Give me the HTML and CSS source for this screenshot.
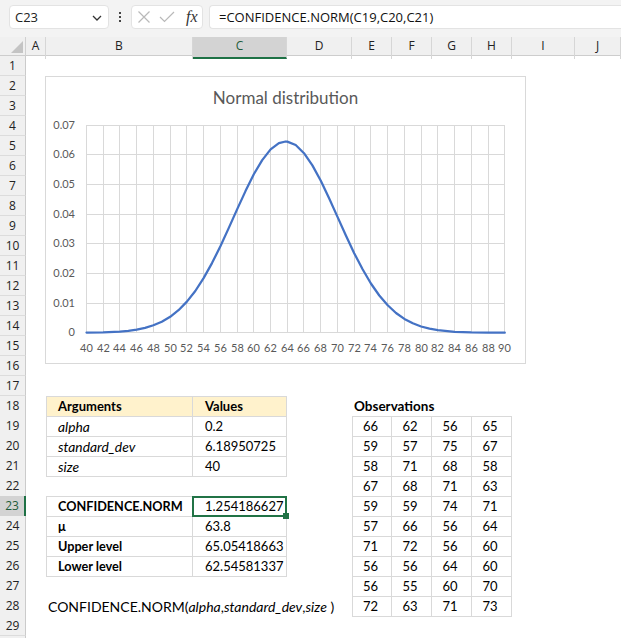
FILE: index.html
```html
<!DOCTYPE html>
<html lang="en">
<head>
<meta charset="utf-8">
<title>CONFIDENCE.NORM</title>
<link rel="stylesheet" href="styles.css">
</head>
<body>
<div class="toolbar">
  <div class="namebox"><span>C23</span>
    <svg class="chev" width="10" height="6" viewBox="0 0 10 6"><path d="M1 1 L5 5 L9 1" fill="none" stroke="#333" stroke-width="1.3"/></svg>
  </div>
  <div class="dots"><i></i><i></i><i></i></div>
  <div class="fxbox">
    <svg width="14" height="14" viewBox="0 0 14 14"><path d="M1.5 1.5 L12.5 12.5 M12.5 1.5 L1.5 12.5" stroke="#b9b9b9" stroke-width="1.2" fill="none"/></svg>
    <svg width="16" height="12" viewBox="0 0 16 12"><path d="M1 6 L5.5 10.5 L15 1" stroke="#b9b9b9" stroke-width="1.2" fill="none"/></svg>
    <span class="fx">fx</span>
  </div>
  <div class="formula">=CONFIDENCE.NORM(C19,C20,C21)</div>
</div>

<div class="sheet">
  <div class="r hdr">
    <div class="corner"><svg width="26" height="19" viewBox="0 0 26 19"><path d="M23 4 L23 16 L11 16 Z" fill="#c4c4c4"/></svg></div>
    <div class="ch">A</div>
    <div class="ch">B</div>
    <div class="ch csel">C</div>
    <div class="ch">D</div>
    <div class="ch">E</div>
    <div class="ch">F</div>
    <div class="ch">G</div>
    <div class="ch">H</div>
    <div class="ch">I</div>
    <div class="ch">J</div>
  </div>
  <div class="r"><div class="rh">1</div></div>
  <div class="r"><div class="rh">2</div></div>
  <div class="r"><div class="rh">3</div></div>
  <div class="r"><div class="rh">4</div></div>
  <div class="r"><div class="rh">5</div></div>
  <div class="r"><div class="rh">6</div></div>
  <div class="r"><div class="rh">7</div></div>
  <div class="r"><div class="rh">8</div></div>
  <div class="r"><div class="rh">9</div></div>
  <div class="r"><div class="rh">10</div></div>
  <div class="r"><div class="rh">11</div></div>
  <div class="r"><div class="rh">12</div></div>
  <div class="r"><div class="rh">13</div></div>
  <div class="r"><div class="rh">14</div></div>
  <div class="r"><div class="rh">15</div></div>
  <div class="r"><div class="rh">16</div></div>
  <div class="r"><div class="rh">17</div></div>
  <div class="r"><div class="rh">18</div>
    <div class="cell b tb tl tt hd">Arguments</div>
    <div class="cell c tb tt hd">Values</div>
    <div class="cell e obs">Observations</div>
  </div>
  <div class="r"><div class="rh">19</div>
    <div class="cell b tb tl it">alpha</div>
    <div class="cell c tb">0.2</div>
    <div class="cell e o ol ot">66</div><div class="cell f o ot">62</div><div class="cell g o ot">56</div><div class="cell h o ot">65</div>
  </div>
  <div class="r"><div class="rh">20</div>
    <div class="cell b tb tl it">standard_dev</div>
    <div class="cell c tb">6.18950725</div>
    <div class="cell e o ol">59</div><div class="cell f o">57</div><div class="cell g o">75</div><div class="cell h o">67</div>
  </div>
  <div class="r"><div class="rh">21</div>
    <div class="cell b tb tl it">size</div>
    <div class="cell c tb">40</div>
    <div class="cell e o ol">58</div><div class="cell f o">71</div><div class="cell g o">68</div><div class="cell h o">58</div>
  </div>
  <div class="r"><div class="rh">22</div>
    <div class="cell e o ol">67</div><div class="cell f o">68</div><div class="cell g o">71</div><div class="cell h o">63</div>
  </div>
  <div class="r"><div class="rh rsel">23</div>
    <div class="cell b tb tl tt bd">CONFIDENCE.NORM</div>
    <div class="cell c tb tt sel">1.254186627</div>
    <div class="cell e o ol">59</div><div class="cell f o">59</div><div class="cell g o">74</div><div class="cell h o">71</div>
  </div>
  <div class="r"><div class="rh">24</div>
    <div class="cell b tb tl bd">μ</div>
    <div class="cell c tb">63.8</div>
    <div class="cell e o ol">57</div><div class="cell f o">66</div><div class="cell g o">56</div><div class="cell h o">64</div>
  </div>
  <div class="r"><div class="rh">25</div>
    <div class="cell b tb tl bd">Upper level</div>
    <div class="cell c tb">65.05418663</div>
    <div class="cell e o ol">71</div><div class="cell f o">72</div><div class="cell g o">56</div><div class="cell h o">60</div>
  </div>
  <div class="r"><div class="rh">26</div>
    <div class="cell b tb tl bd">Lower level</div>
    <div class="cell c tb">62.54581337</div>
    <div class="cell e o ol">56</div><div class="cell f o">56</div><div class="cell g o">64</div><div class="cell h o">60</div>
  </div>
  <div class="r"><div class="rh">27</div>
    <div class="cell e o ol">56</div><div class="cell f o">55</div><div class="cell g o">60</div><div class="cell h o">70</div>
  </div>
  <div class="r"><div class="rh">28</div>
    <div class="cell bspan syntax">CONFIDENCE.NORM(<i>alpha</i>,<i>standard_dev</i>,<i>size</i> )</div>
    <div class="cell e o ol">72</div><div class="cell f o">63</div><div class="cell g o">71</div><div class="cell h o">73</div>
  </div>
  <div class="r"><div class="rh">29</div></div>
  <div class="r"><div class="rh"></div></div>

  <div class="chart">
    <svg width="481" height="288" viewBox="0 0 481 288">
      <rect x="0.5" y="0.5" width="480" height="287" fill="#fff" stroke="#d9d9d9"/>
      <text class="title" x="240.5" y="28" text-anchor="middle">Normal distribution</text>
      <g stroke="#d9d9d9" stroke-width="1" fill="none">
        <path d="M41 49.5H460M41 78.5H460M41 108.5H460M41 138.5H460M41 167.5H460M41 197.5H460M41 227.5H460M41 256.5H460"/>
        <path d="M41.5 49V257M58.5 49V257M74.5 49V257M91.5 49V257M108.5 49V257M125.5 49V257M141.5 49V257M158.5 49V257M175.5 49V257M192.5 49V257M208.5 49V257M225.5 49V257M242.5 49V257M258.5 49V257M275.5 49V257M292.5 49V257M309.5 49V257M325.5 49V257M342.5 49V257M359.5 49V257M376.5 49V257M392.5 49V257M409.5 49V257M426.5 49V257M443.5 49V257M459.5 49V257"/>
      </g>
      <g class="ylab" text-anchor="end">
        <text x="30" y="53">0.07</text>
        <text x="30" y="82">0.06</text>
        <text x="30" y="112">0.05</text>
        <text x="30" y="142">0.04</text>
        <text x="30" y="171">0.03</text>
        <text x="30" y="201">0.02</text>
        <text x="30" y="231">0.01</text>
        <text x="30" y="260">0</text>
      </g>
      <g class="xlab" text-anchor="middle">
        <text x="41.5" y="276">40</text>
        <text x="58.5" y="276">42</text>
        <text x="74.5" y="276">44</text>
        <text x="91.5" y="276">46</text>
        <text x="108.5" y="276">48</text>
        <text x="125.5" y="276">50</text>
        <text x="141.5" y="276">52</text>
        <text x="158.5" y="276">54</text>
        <text x="175.5" y="276">56</text>
        <text x="192.5" y="276">58</text>
        <text x="208.5" y="276">60</text>
        <text x="225.5" y="276">62</text>
        <text x="242.5" y="276">64</text>
        <text x="258.5" y="276">66</text>
        <text x="275.5" y="276">68</text>
        <text x="292.5" y="276">70</text>
        <text x="309.5" y="276">72</text>
        <text x="325.5" y="276">74</text>
        <text x="342.5" y="276">76</text>
        <text x="359.5" y="276">78</text>
        <text x="376.5" y="276">80</text>
        <text x="392.5" y="276">82</text>
        <text x="409.5" y="276">84</text>
        <text x="426.5" y="276">86</text>
        <text x="443.5" y="276">88</text>
        <text x="459.5" y="276">90</text>
      </g>
      <polyline fill="none" stroke="#4472c4" stroke-width="2.25" stroke-linejoin="round" stroke-linecap="round"
        points="41.5,256.6 58.2,256.3 75.0,255.6 83.3,254.8 91.7,253.6 100.1,251.9 108.4,249.3 116.8,245.7 125.2,240.8 133.5,234.2 141.9,225.6 150.3,215.0 158.6,202.1 167.0,187.1 175.4,170.3 183.7,152.1 192.1,133.4 200.5,115.1 208.8,98.3 217.2,84.1 225.6,73.4 233.9,67.1 240.6,65.5 242.3,65.6 250.7,69.0 259.0,77.2 267.4,89.4 275.8,104.8 284.1,122.3 292.5,140.9 300.9,159.5 309.2,177.2 317.6,193.3 325.9,207.5 334.3,219.5 342.7,229.3 351.0,237.0 359.4,242.9 367.8,247.3 376.1,250.5 384.5,252.7 392.9,254.2 409.6,255.8 426.3,256.4 443.1,256.6 459.8,256.7"/>
    </svg>
  </div>
</div>
</body>
</html>
```

FILE: styles.css
```css
* { box-sizing: border-box; margin: 0; padding: 0; }
html, body { width: 621px; height: 638px; overflow: hidden; background: #fff; }
body { font-family: "Lato", "Liberation Sans", sans-serif; color: #000; }

/* formula bar */
.toolbar { height: 37px; background: #f3f3f3; display: flex; align-items: flex-start; padding-top: 5px; }
.namebox { margin-left: 9px; width: 100px; height: 24px; background: #fff; border: 1px solid #e3e3e3; border-radius: 4px;
  display: flex; align-items: center; justify-content: space-between; padding: 0 6px 0 5px;
  font-family: "Open Sans", sans-serif; font-size: 13px; color: #222; }
.chev { margin-top: 1px; }
.dots { width: 22px; height: 24px; display: flex; flex-direction: column; align-items: center; justify-content: center; gap: 2px; }
.dots i { display: block; width: 2px; height: 2px; background: #444; }
.fxbox { width: 72px; height: 24px; background: #fff; border: 1px solid #e3e3e3; border-radius: 4px;
  display: flex; align-items: center; padding-left: 5px; gap: 8px; }
.fx { font-family: "Liberation Serif", serif; font-style: italic; font-size: 16px; color: #333; margin-left: 3px; }
.formula { margin-left: 6px; flex: 1; height: 24px; background: #fff; border: 1px solid #e3e3e3; border-right: none;
  border-radius: 4px 0 0 4px; padding-left: 9px; font-family: "Open Sans", sans-serif; font-size: 13px; line-height: 22px; color: #111; }

/* sheet grid */
.sheet { position: relative; }
.r { display: grid; grid-template-columns: 26px 20px 147px 94px 65px 40px 40px 40px 40px 63px 46px; height: 20px; }
.r.hdr { height: 19px; background: #f0f0f0; border-bottom: 1px solid #cdcdcd; }
.corner { grid-column: 1; border-right: 1px solid #d0d0d0; }
.ch { font-family: "Open Sans", sans-serif; font-size: 12px; color: #222; text-align: center; line-height: 18px;
  border-right: 1px solid #d6d6d6; }
.ch.csel { background: #d3d3d3; border-bottom: 2px solid #1e7145; color: #1f5c3b; }
.rh { grid-column: 1; background: #f0f0f0; border-right: 1px solid #cbcbcb; border-bottom: 1px solid #dcdcdc;
  font-family: "Open Sans", sans-serif; font-size: 12px; color: #222; text-align: center; line-height: 18px; padding-top: 1px; }
.rh.rsel { background: #d3d3d3; border-right: 2px solid #1e7145; color: #1f5c3b; }

.cell { font-size: 13px; line-height: 19px; padding-top: 1px; white-space: nowrap; }
.b { grid-column: 3; padding-left: 11px; }
.c { grid-column: 4; padding-left: 12px; }
.bspan { grid-column: 3 / span 2; padding-left: 2px; }
.syntax { font-size: 14px; }
.e { grid-column: 6; }
.f { grid-column: 7; }
.g { grid-column: 8; }
.h { grid-column: 9; }
.obs { grid-column: 6 / span 4; padding-left: 2px; font-weight: bold; font-size: 13.5px; }

.tb { border-right: 1px solid #d9d9d9; border-bottom: 1px solid #d9d9d9; }
.tl { border-left: 1px solid #d9d9d9; }
.tt { border-top: 1px solid #d9d9d9; padding-top: 0; }
.hd { background: #fff2cc; font-weight: bold; }
.it { font-style: italic; font-size: 13.8px; }
.bd { font-weight: bold; font-size: 12.7px; }

.o { text-align: center; padding-right: 3px; border-right: 1px solid #d9d9d9; border-bottom: 1px solid #d9d9d9; }
.ol { border-left: 1px solid #d9d9d9; }
.ot { border-top: 1px solid #d9d9d9; padding-top: 0; }

.sel { position: relative; }
.sel::after { content: ""; position: absolute; left: -1px; top: -1px; right: -1px; bottom: -1px; border: 2px solid #217346; }
.sel::before { content: ""; position: absolute; right: -3px; bottom: -3px; width: 6px; height: 6px; background: #217346; z-index: 2; }

/* chart */
.chart { position: absolute; left: 45px; top: 39px; width: 481px; height: 288px; }
.chart svg { display: block; }
.title { font-family: "Lato", sans-serif; font-size: 17px; fill: #595959; }
.ylab text, .xlab text { font-family: "Lato", sans-serif; font-size: 11px; fill: #595959; }
```
